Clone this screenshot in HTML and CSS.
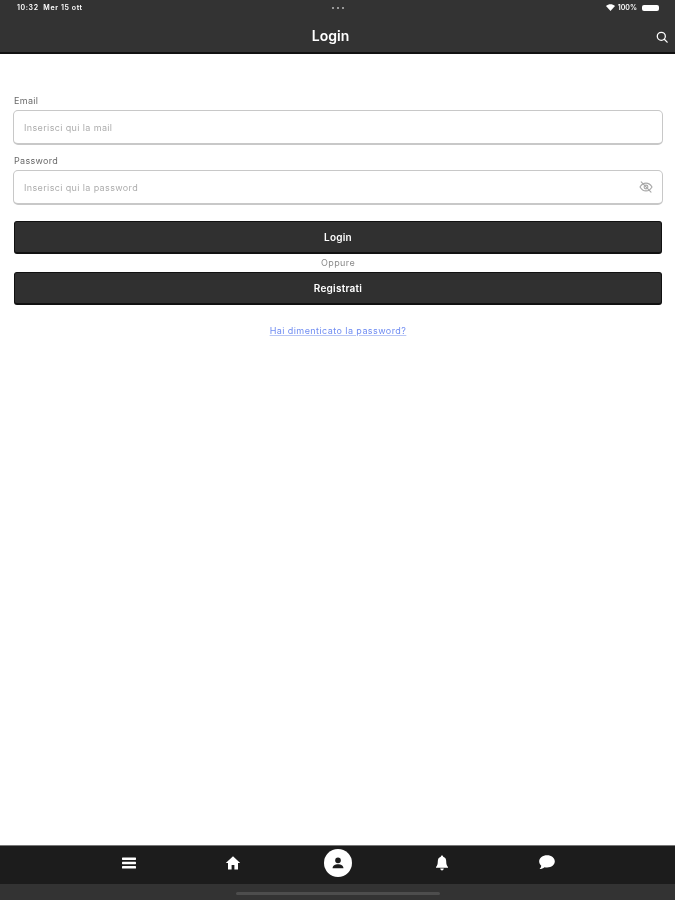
FILE: index.html
```html
<!DOCTYPE html>
<html lang="en">

<head>
  <meta charset="UTF-8">
  <meta name="viewport" content="width=device-width, initial-scale=1.0">
  <title>Login</title>
  <link rel="stylesheet" href="styles.css">
</head>

<body>
  <div class="top">
    <div class="status-bar">
      <div class="status-time">10:32&nbsp; Mer 15 ott</div>
      <div class="status-dots"><span></span><span></span><span></span></div>
      <div class="status-right">
        <svg class="wifi" viewBox="0 0 12 9"><path d="M0 2.600C3.400-.6 8.600-.6 12 2.600L6 9z" fill="#fff" /></svg>
        <span>100%</span>
        <div class="battery"></div>
      </div>
    </div>
    <div class="header">
      <h1>Login</h1>
      <svg class="search" viewBox="0 0 14 14" fill="none" stroke="#fff" stroke-width="1.500">
        <circle cx="6.200" cy="6.200" r="4.700" />
        <path d="M9.700 9.700L13 13" stroke-linecap="round" />
      </svg>
    </div>
  </div>

  <form class="content">
    <label class="field-label">Email</label>
    <div class="field">
      <span class="placeholder">Inserisci qui la mail</span>
    </div>

    <label class="field-label password-label">Password</label>
    <div class="field">
      <span class="placeholder">Inserisci qui la password</span>
      <svg class="eye" viewBox="0 0 14 14" fill="none" stroke="#a8a8a8" stroke-width="1.100" stroke-linecap="round">
        <path d="M1 7c1.500-2.600 3.600-3.900 6-3.900S11.500 4.400 13 7c-1.500 2.600-3.600 3.900-6 3.900S2.500 9.600 1 7z" />
        <circle cx="7" cy="7" r="1.900" />
        <path d="M2.200 1.800l9.800 10.400" />
      </svg>
    </div>

    <button type="button" class="btn login-btn">Login</button>
    <div class="or">Oppure</div>
    <button type="button" class="btn">Registrati</button>

    <a class="forgot" href="#">Hai dimenticato la password?</a>
  </form>

  <div class="tabs">
    <div class="tab">
      <svg class="tab-icon" viewBox="0 0 16 16" fill="#fff">
        <rect x="1" y="2.500" width="14" height="2.400" rx=".6" />
        <rect x="1" y="6.800" width="14" height="2.400" rx=".6" />
        <rect x="1" y="11.100" width="14" height="2.400" rx=".6" />
      </svg>
    </div>
    <div class="tab">
      <svg class="tab-icon" viewBox="0 0 16 16" fill="#fff">
        <path d="M8 1.200L.8 8h2.200v6.500h3.600V10h2.800v4.500H13V8h2.200z" />
      </svg>
    </div>
    <div class="tab">
      <div class="avatar">
        <svg viewBox="0 0 16 16" fill="#1c1c1c">
          <circle cx="8" cy="5" r="3.200" />
          <path d="M1.800 14c0-3 3-4.500 6.200-4.500s6.200 1.500 6.200 4.500z" />
        </svg>
      </div>
    </div>
    <div class="tab">
      <svg class="tab-icon" viewBox="0 0 16 16" fill="#fff">
        <path d="M8 .6c.7 0 1.100.5 1.200 1.200 2 .6 3 2.200 3 4.500 0 3 .6 4.400 1.800 5.700v.8H2v-.8c1.200-1.300 1.800-2.700 1.800-5.700 0-2.300 1-3.900 3-4.500C6.900 1.100 7.300.6 8 .6zM6.200 13.600h3.600C9.700 14.700 9 15.400 8 15.400s-1.700-.7-1.800-1.800z" />
      </svg>
    </div>
    <div class="tab">
      <svg class="tab-icon chat-icon" viewBox="0 0 16 16" fill="#fff">
        <path d="M8.500 1.800c3.700 0 6.500 2.300 6.500 5.200s-2.800 5.200-6.500 5.200c-.8 0-1.500-.1-2.200-.3-1 .9-2.500 1.500-4.100 1.500.8-.8 1.300-1.700 1.400-2.700C2.500 9.800 1.800 8.500 1.800 7c0-2.900 3-5.200 6.700-5.200z" />
      </svg>
    </div>
  </div>
  <div class="home-bar">
    <div class="home-indicator"></div>
  </div>
</body>

</html>
```

FILE: styles.css
```css
body {
  font-family: "Inter", "Liberation Sans", sans-serif;
  margin: 0;
  padding: 0;
  height: 100vh;
  display: flex;
  flex-direction: column;
  overflow: hidden;
  background: #fff;
  filter: blur(.35px);
}

.top {
  background: #333;
  border-bottom: 2px solid #111;
  color: #fff;
}

.status-bar {
  height: 15px;
  padding: 0 16px 2px 17px;
  display: flex;
  align-items: center;
  justify-content: space-between;
  font-size: 7px;
  font-weight: 600;
  letter-spacing: .6px;
  position: relative;
}

.status-dots {
  display: flex;
  gap: 3px;
  position: absolute;
  left: 332px;
  top: 7px;
}

.status-dots span {
  width: 2px;
  height: 2px;
  border-radius: 50%;
  background: #bbb;
}

.status-right {
  display: flex;
  align-items: center;
  gap: 3px;
  letter-spacing: 0;
}

.wifi {
  width: 9px;
  height: 7px;
}

.battery {
  width: 17px;
  height: 6px;
  margin-left: 2px;
  background: #fff;
  border-radius: 2px;
}

.header {
  height: 33px;
  padding-top: 2px;
  display: flex;
  align-items: center;
  justify-content: center;
  position: relative;
}

.header h1 {
  margin: 0 14px 0 0;
  font-size: 14px;
  font-weight: 600;
}

.search {
  position: absolute;
  right: 7px;
  top: 14px;
  width: 12px;
  height: 12px;
}

.content {
  flex: 1;
  padding: 41px 12px 0 13px;
  display: flex;
  flex-direction: column;
}

.field-label {
  font-size: 9px;
  line-height: 12px;
  height: 15px;
  padding-left: 1px;
  letter-spacing: .3px;
  color: #6a6a6a;
}

.password-label {
  margin-top: 10px;
}

.field {
  height: 35px;
  box-sizing: border-box;
  border: 1px solid #c8c8c8;
  border-bottom-width: 2px;
  border-radius: 5px;
  padding: 0 9px 0 10px;
  display: flex;
  align-items: center;
  justify-content: space-between;
}

.placeholder {
  font-size: 9px;
  letter-spacing: .37px;
  color: #adadad;
}

.eye {
  width: 14px;
  height: 14px;
}

.btn {
  height: 33px;
  margin: 0 1px;
  padding: 0;
  background: #303030;
  color: #fff;
  border: 1px solid #111;
  border-bottom-width: 2px;
  border-radius: 3px;
  font-family: inherit;
  font-size: 10px;
  font-weight: 600;
  letter-spacing: .25px;
}

.login-btn {
  margin-top: 16px;
}

.or {
  height: 18px;
  line-height: 18px;
  text-align: center;
  font-size: 9px;
  letter-spacing: .4px;
  color: #8a8a8a;
}

.forgot {
  margin-top: 20px;
  align-self: center;
  font-size: 9px;
  line-height: 12px;
  letter-spacing: .43px;
  color: #6f8cf2;
  text-decoration-color: #b8c6f5;
}

.tabs {
  height: 39px;
  box-sizing: border-box;
  border-top: 1px solid #777;
  background: #1c1c1c;
  padding-bottom: 5px;
  display: flex;
  justify-content: center;
  align-items: center;
}

.tab {
  width: 104.5px;
  display: flex;
  justify-content: center;
}

.tab-icon {
  width: 16px;
  height: 16px;
}

.chat-icon {
  width: 19px;
  height: 19px;
}

.avatar {
  width: 28px;
  height: 28px;
  background: #fff;
  border-radius: 50%;
  display: flex;
  align-items: center;
  justify-content: center;
}

.avatar svg {
  width: 14px;
  height: 14px;
}

.home-bar {
  height: 16px;
  background: #333;
  display: flex;
  justify-content: center;
  align-items: flex-end;
  padding-bottom: 5px;
  box-sizing: border-box;
}

.home-indicator {
  width: 204px;
  height: 3px;
  background: #4d4d4d;
  border-radius: 2px;
}
```
